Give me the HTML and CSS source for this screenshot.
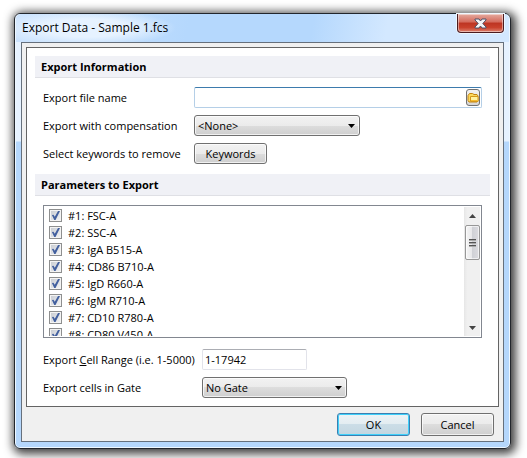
FILE: index.html
```
<!DOCTYPE html>
<html lang="en">
<head>
    <meta charset="UTF-8">
    <meta name="viewport" content="width=device-width, initial-scale=1.0">
    <title>Export Data - Sample 1.fcs</title>
    <link rel="stylesheet" href="styles.css">
</head>
<body>
    <form class="dialog">
        <header class="titlebar">
            <h1>Export Data - Sample 1.fcs</h1>
            <button type="button" class="close" aria-label="Close">
                <svg width="13" height="11" viewBox="0 0 13 11">
                    <path d="M1 1h4l1.500 2L8 1h4v1L8.800 5.500 12 9v1H8L6.500 8 5 10H1V9l3.200-3.500L1 2z" fill="#f4f4f6" stroke="#4d5068"/>
                </svg>
            </button>
        </header>

        <div class="client">
            <div class="panel">
                <h2>Export Information</h2>
                <div class="fields">
                    <div class="row">
                        <label for="fileName">Export file name</label>
                        <div class="file-box">
                            <input type="text" id="fileName">
                            <button type="button" class="browse" aria-label="Browse">
                                <svg width="12" height="12" viewBox="0 0 12 12">
                                    <path d="M1 8.500V3.500l1.500-2h3l1.500 1h3l1 1.500v5l-1 1H2z" fill="#fbd95c" stroke="#c48410"/>
                                    <path d="M3.500 4.500h7.500v5H3.500z" fill="#fff3a0" stroke="#d3961a"/>
                                    <path d="M4 8.500h6.500" stroke="#f6bd2d"/>
                                </svg>
                            </button>
                        </div>
                    </div>
                    <div class="row">
                        <label for="compensation">Export with compensation</label>
                        <div class="select select-wide">
                            <select id="compensation">
                                <option>&lt;None&gt;</option>
                            </select>
                            <svg class="arrow" width="7" height="4" viewBox="0 0 7 4"><path d="M0 0h7L3.500 4z"/></svg>
                        </div>
                    </div>
                    <div class="row">
                        <label for="keywords">Select keywords to remove</label>
                        <button type="button" id="keywords" class="btn">Keywords</button>
                    </div>
                </div>

                <h2>Parameters to Export</h2>
                <div class="list-box">
                    <div class="list">
                        <label><input type="checkbox" checked>#1: FSC-A</label>
                        <label><input type="checkbox" checked>#2: SSC-A</label>
                        <label><input type="checkbox" checked>#3: IgA B515-A</label>
                        <label><input type="checkbox" checked>#4: CD86 B710-A</label>
                        <label><input type="checkbox" checked>#5: IgD R660-A</label>
                        <label><input type="checkbox" checked>#6: IgM R710-A</label>
                        <label><input type="checkbox" checked>#7: CD10 R780-A</label>
                        <label><input type="checkbox" checked>#8: CD80 V450-A</label>
                    </div>
                    <div class="scrollbar">
                        <svg width="7" height="4" viewBox="0 0 7 4"><path d="M0 4h7L3.500 0z" fill="#444"/></svg>
                        <div class="thumb">
                            <svg width="7" height="8" viewBox="0 0 7 8"><path d="M0 .5h7M0 3.500h7M0 6.500h7" stroke="#555"/><path d="M0 1.500h7M0 4.500h7M0 7.500h7" stroke="#aaa"/></svg>
                        </div>
                        <svg width="7" height="4" viewBox="0 0 7 4"><path d="M0 0h7L3.500 4z" fill="#444"/></svg>
                    </div>
                </div>

                <div class="fields fields-range">
                    <div class="row">
                        <label for="range">Export <u>C</u>ell Range (i.e. 1-5000)</label>
                        <input type="text" id="range" class="range" value="1-17942">
                    </div>
                    <div class="row">
                        <label for="gate">Export cells in Gate</label>
                        <div class="select">
                            <select id="gate">
                                <option>No Gate</option>
                            </select>
                            <svg class="arrow" width="7" height="4" viewBox="0 0 7 4"><path d="M0 0h7L3.500 4z"/></svg>
                        </div>
                    </div>
                </div>
            </div>

            <footer class="actions">
                <button type="submit" class="btn btn-default">OK</button>
                <button type="button" class="btn">Cancel</button>
            </footer>
        </div>
    </form>
</body>
</html>
```
FILE: styles.css
```
* {
    box-sizing: border-box;
}

body {
    margin: 0;
    padding: 13px 16px 9px 14px;
    background-color: #fff;
    font-family: "Open Sans", "Noto Sans", sans-serif;
    font-size: 11px;
    color: #000;
    overflow: hidden;
}

input, select, button {
    font: inherit;
    color: inherit;
    margin: 0;
}

h1, h2 {
    margin: 0;
    font-size: 12px;
}

/* window frame */
.dialog {
    padding: 0 6px 6px;
    border: 1px solid #22262c;
    border-radius: 6px;
    background: linear-gradient(#e6f2ff 0, #e6f2ff 127px, #b5d7fc 128px);
    box-shadow: inset 0 0 0 1px #eef7ff, 2px 2px 10px 3px rgba(0, 0, 0, 0.75);
}

.titlebar {
    display: flex;
    justify-content: space-between;
    align-items: flex-start;
    height: 28px;
    margin: 0 -5px;
    padding: 0 5px;
    border-radius: 5px 5px 0 0;
    background: radial-gradient(ellipse 90px 18px at 70px 14px, #e6f2ff 50%, transparent),
        linear-gradient(100deg, #cde4fe 0, #b5d8fd 35%, #b5d8fd 60%, #d3e8ff 75%, #d3e8ff 100%);
}

.titlebar h1 {
    padding-left: 1px;
    font-weight: normal;
    line-height: 28px;
}

.close {
    display: flex;
    justify-content: center;
    align-items: center;
    width: 47px;
    height: 19px;
    padding: 0;
    border: 1px solid #4b1c20;
    border-top: 0;
    border-radius: 0 0 4px 4px;
    background: linear-gradient(#e5aba0 0, #d4695b 45%, #bd3422 50%, #c9412c 75%, #dd8270 100%);
    box-shadow: inset 0 0 0 1px rgba(255, 255, 255, 0.45), 0 0 0 1px #eef7ff;
}

.client {
    padding: 4px;
    border: 1px solid #66707c;
    background-color: #f0f0f0;
}

.panel {
    padding: 8px;
    border: 1px solid #646464;
    background-color: #fff;
}

.panel h2 {
    height: 22px;
    padding-left: 6px;
    border-bottom: 1px solid #dfe0e5;
    background-color: #f0f1f6;
    font-size: 11px;
    line-height: 21px;
}

/* form rows */
.fields {
    display: grid;
    gap: 7px;
    padding: 9px 8px 10px;
}

.fields-range {
    padding: 11px 8px 0;
}

.row {
    display: grid;
    grid-template-columns: 151px 1fr;
    align-items: center;
    justify-items: start;
    height: 21px;
}

.fields-range .row {
    grid-template-columns: 159px 1fr;
}

.row label {
    white-space: nowrap;
}

input[type="text"] {
    height: 21px;
    border: 1px solid #e2e3ea;
    border-top-color: #abadb3;
    border-radius: 2px;
    padding: 0 2px;
    background-color: #fff;
    outline: none;
}

.file-box {
    position: relative;
    width: 100%;
}

.file-box input[type="text"] {
    display: block;
    width: 100%;
    padding-right: 20px;
    border-color: #b5cfe7;
    border-top-color: #3d7bad;
}

.browse {
    position: absolute;
    top: 2px;
    right: 2px;
    display: flex;
    justify-content: center;
    align-items: center;
    width: 14px;
    height: 17px;
    padding: 0;
    border: 1px solid #707070;
    border-radius: 3px;
    background: linear-gradient(#f2f2f2, #d6d6d6);
}

.range {
    width: 105px;
}

.select {
    position: relative;
    width: 145px;
}

.select-wide {
    width: 166px;
}

select, .btn {
    border: 1px solid #707070;
    border-radius: 3px;
    background: linear-gradient(#f2f2f2 0, #ebebeb 50%, #dddddd 50%, #cfcfcf 100%);
    box-shadow: inset 0 0 0 1px rgba(255, 255, 255, 0.7);
}

select {
    display: block;
    width: 100%;
    height: 21px;
    padding: 0 20px 0 3px;
    appearance: none;
    outline: none;
}

.arrow {
    position: absolute;
    top: 9px;
    right: 5px;
    pointer-events: none;
}

.btn {
    width: 73px;
    height: 21px;
    padding: 0;
}

/* parameter list */
.list-box {
    display: flex;
    height: 133px;
    margin: 9px 8px 0;
    padding: 1px;
    border: 1px solid #828790;
}

.list {
    flex: 1;
    padding: 0 4px;
    overflow-y: auto;
    scrollbar-width: none;
}

.list label {
    display: flex;
    align-items: center;
    gap: 6px;
    height: 17px;
}

.list input {
    flex: none;
    width: 13px;
    height: 13px;
    border: 1px solid #8e8f8f;
    appearance: none;
    background: linear-gradient(135deg, #c5c9d0, #f6f6f6);
    box-shadow: inset 0 0 0 1px #f4f4f4;
}

.list input:checked::before {
    content: "";
    display: block;
    width: 9px;
    height: 9px;
    margin: 1px;
    background-color: #43609f;
    clip-path: polygon(10% 45%, 28% 42%, 42% 64%, 78% 0, 100% 0, 50% 100%, 36% 100%);
}

.scrollbar {
    display: flex;
    flex-direction: column;
    align-items: center;
    width: 16px;
    padding: 7px 0 6px;
    background: linear-gradient(90deg, #e6e6e6, #f0f0f0 20%, #f0f0f0);
}

.thumb {
    display: flex;
    justify-content: center;
    align-items: center;
    width: 15px;
    height: 35px;
    margin: 7px 0 auto;
    border: 1px solid #979797;
    border-radius: 2px;
    background: linear-gradient(90deg, #f5f5f5 0, #e8e8ea 45%, #d0d1d6 50%, #dcdce0 100%);
    box-shadow: inset 0 0 0 1px rgba(255, 255, 255, 0.6);
}

.actions {
    display: flex;
    justify-content: flex-end;
    gap: 11px;
    padding: 6px 5px 1px;
}

.actions .btn {
    height: 23px;
}

.actions .btn-default {
    border-color: #3c7fb1;
    background: linear-gradient(#eef3f6 0, #e2ecf1 50%, #cbdde7 50%, #c3d6e0 100%);
    box-shadow: inset 0 0 0 1px #3fd0fa;
}
```
